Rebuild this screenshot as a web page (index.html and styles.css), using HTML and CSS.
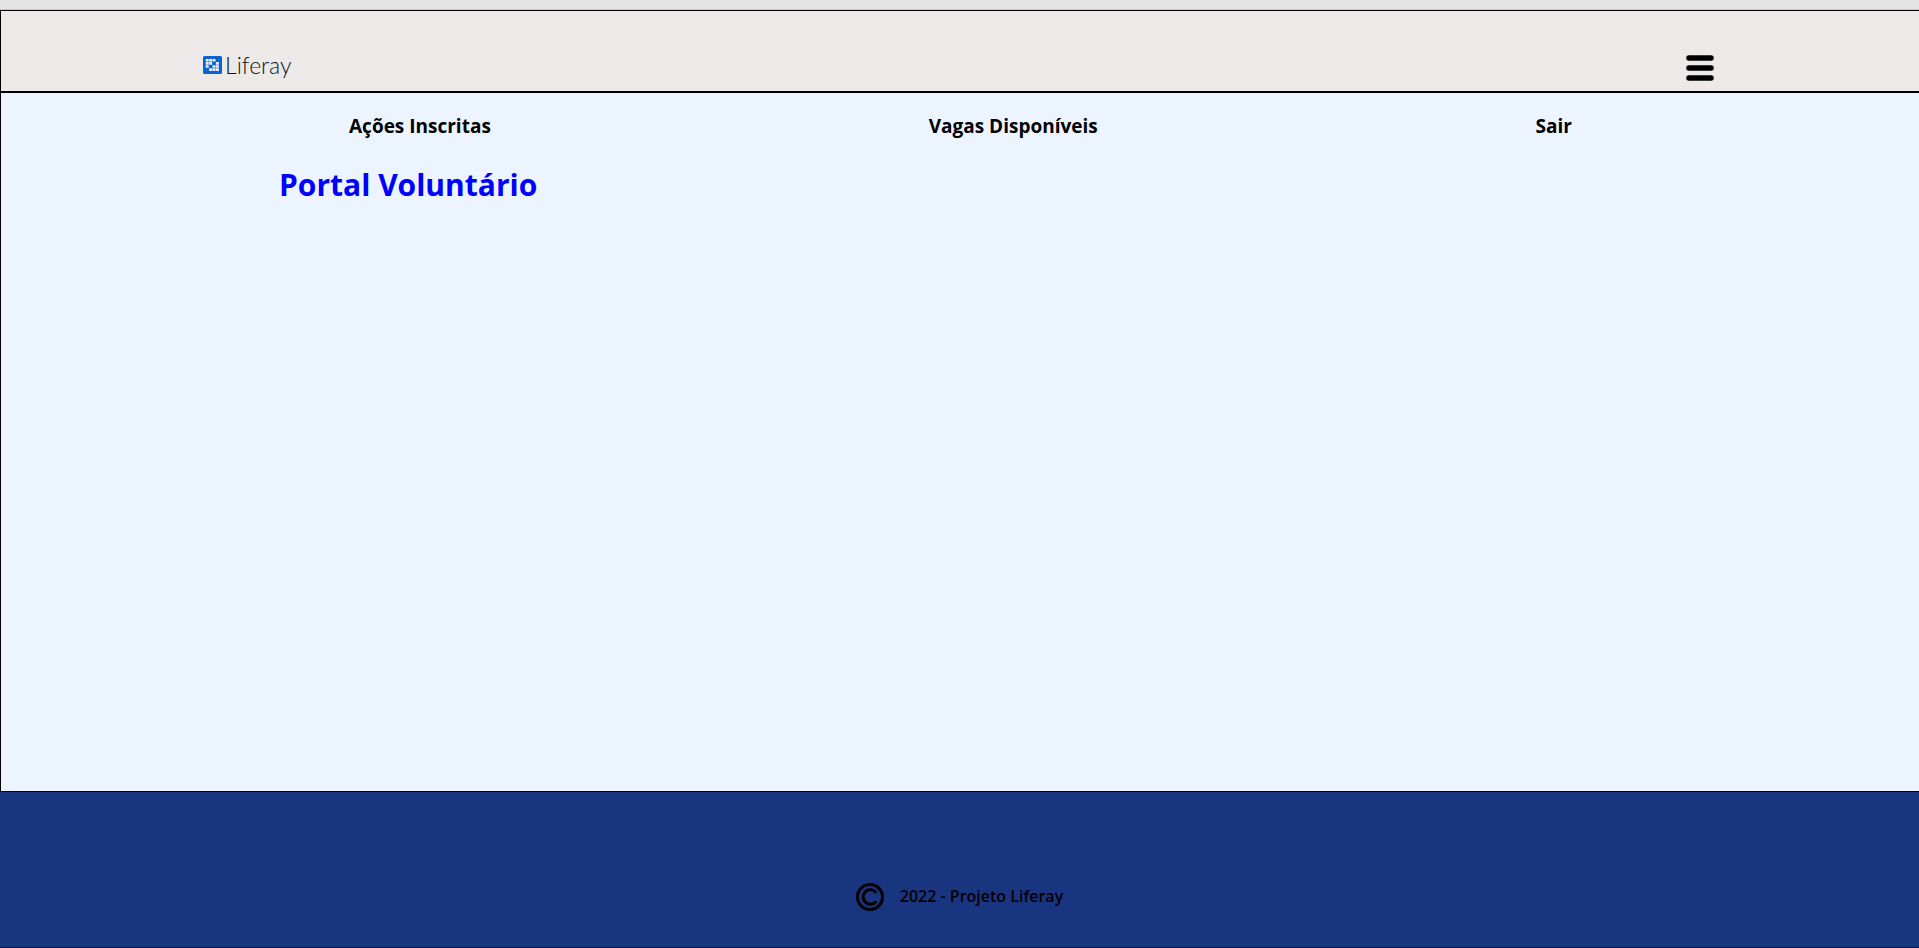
FILE: index.html
```html
<!DOCTYPE html>
<html lang="pt-BR">
<head>
<meta charset="utf-8">
<title>Portal Voluntário</title>
<link rel="stylesheet" href="styles.css">
</head>
<body>
<div class="strip"></div>
<header class="header">
  <a class="logo" href="#">
    <svg class="logo-mark" viewBox="0 0 19 18" aria-hidden="true">
      <rect width="19" height="18" rx="1.500" fill="#0b63ce"/>
      <path fill="#e7eefb" d="M2.700 3h3v2.600h-3zM6.100 3h3v2.600h-3zM9.500 3h3v2.600h-3zM2.700 6.100h3v2.600h-3zM6.100 6.100h3v2.600h-3zM12.900 6.100h3v2.600h-3zM2.700 9.200h3v2.600h-3zM9.500 9.200h3v2.600h-3zM12.900 9.200h3v2.600h-3zM6.100 12.300h3v2.600h-3zM9.500 12.300h3v2.600h-3zM12.900 12.300h3v2.600h-3z"/>
    </svg>
    <span class="logo-text">Liferay</span>
  </a>
  <button class="menu" type="button" aria-label="Menu">
    <svg viewBox="0 0 28 26" aria-hidden="true">
      <path d="M3 3h22M3 13h22M3 23h22" stroke="#000" stroke-width="5.600" stroke-linecap="round"/>
    </svg>
  </button>
</header>
<main class="main">
  <nav class="nav">
    <a href="#">Ações Inscritas</a>
    <a href="#">Vagas Disponíveis</a>
    <a href="#">Sair</a>
  </nav>
  <h1 class="title">Portal Voluntário</h1>
</main>
<footer class="footer">
  <svg class="copyright" viewBox="0 0 28 28" fill="none" stroke="#000" aria-hidden="true">
    <circle cx="14" cy="14" r="12.500" stroke-width="3"/>
    <path d="M20.300 9.800A7.300 7.300 0 1 0 20.300 18.200" stroke-width="3"/>
  </svg>
  <p class="footer-text">2022 - Projeto Liferay</p>
</footer>
</body>
</html>
```
FILE: styles.css
```css
* {
  box-sizing: border-box;
}

body {
  margin: 0;
  min-height: 100vh;
  display: flex;
  flex-direction: column;
  background: #ecf4ff;
  color: #000;
  font-family: "Segoe UI", "Open Sans", "Noto Sans", sans-serif;
}

.strip {
  height: 10px;
  background: #e4e4e4;
  border-bottom: 1px solid #c4c4c4;
}

.header {
  display: flex;
  justify-content: space-between;
  align-items: flex-start;
  padding: 40px 205px 6px 202px;
  border: 1px solid #000;
  border-width: 1px 0 2px 1px;
  background: #ede9e8;
}

.logo {
  display: flex;
  align-items: center;
  gap: 3px;
  height: 28px;
  color: #0b1620;
  text-decoration: none;
}

.logo-mark {
  width: 19px;
  height: 18px;
}

.logo-text {
  font-family: Lato, "Open Sans", sans-serif;
  font-size: 23px;
  line-height: 28px;
  font-weight: 300;
}

.menu {
  width: 28px;
  height: 34px;
  padding: 4px 0;
  border: 0;
  background: none;
}

.menu svg {
  display: block;
  width: 28px;
  height: 26px;
}

.main {
  flex: 1;
  border-left: 1px solid #000;
  border-bottom: 1px solid #000;
}

.nav {
  display: flex;
  justify-content: space-between;
  padding: 20px 347px 0 348px;
}

.nav a {
  color: #000;
  font-size: 19px;
  line-height: 27px;
  font-weight: 700;
  text-decoration: none;
}

.title {
  margin: 24px 0 0 278px;
  color: #00f;
  font-size: 30px;
  line-height: 42px;
  font-weight: 700;
}

.footer {
  display: flex;
  justify-content: center;
  align-items: center;
  gap: 16px;
  padding: 90px 0 36px;
  border-bottom: 1px solid #101820;
  background: #1a3580;
}

.copyright {
  width: 28px;
  height: 28px;
}

.footer-text {
  margin: 0;
  font-size: 16px;
  line-height: 29px;
  font-weight: 600;
}
```
